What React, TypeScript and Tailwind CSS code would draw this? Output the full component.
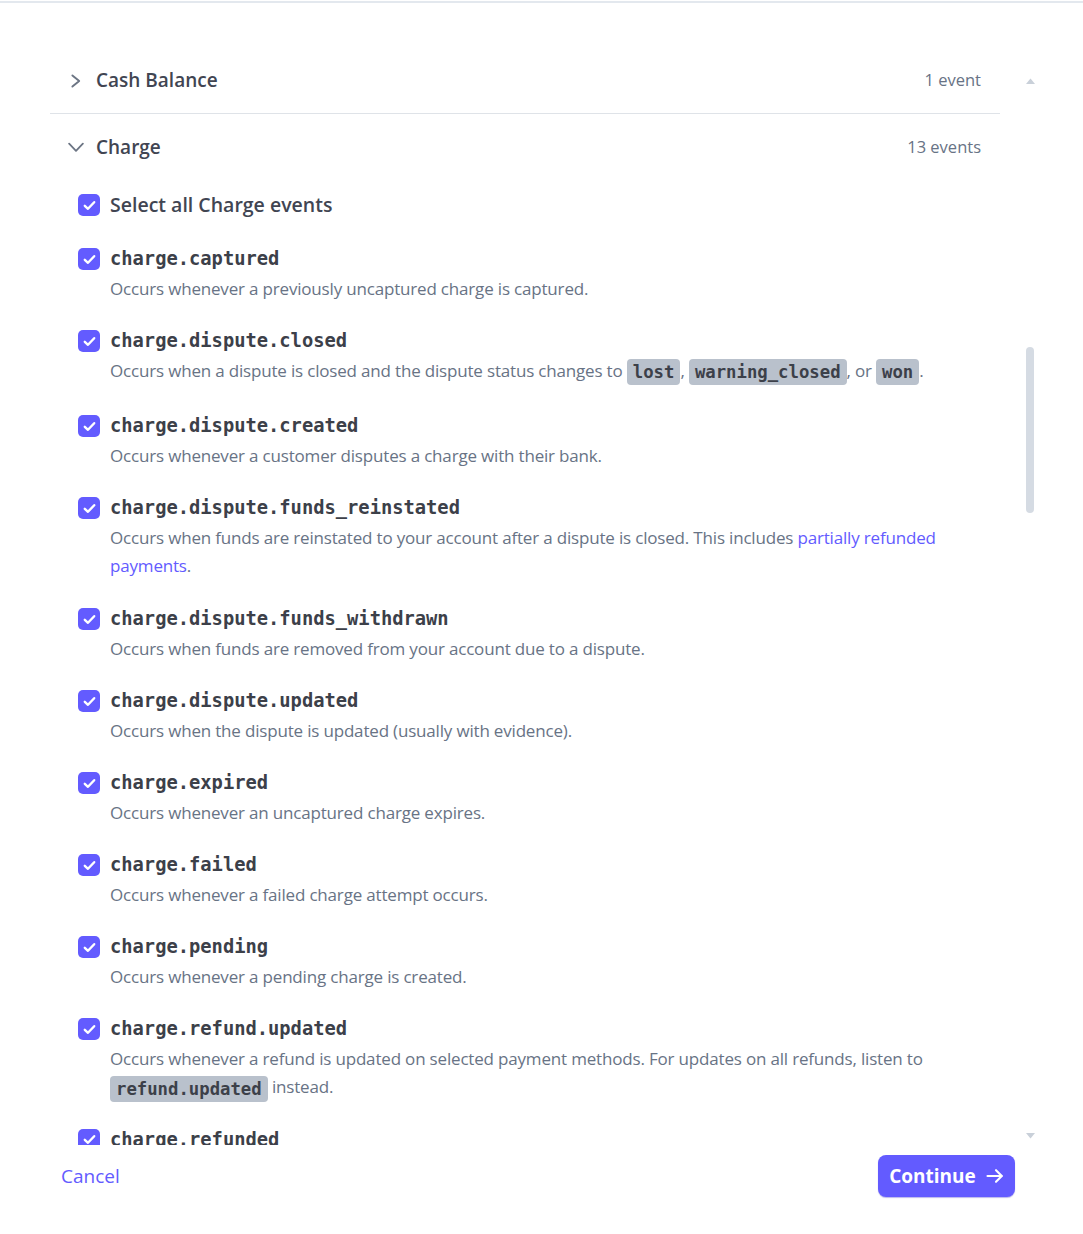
import React from "react";

type Part = string | { code: string } | { link: string };

interface EventItem {
    name: string;
    desc: Part[];
    extra?: string;
}

const chargeEvents: EventItem[] = [
    { name: "charge.captured", desc: ["Occurs whenever a previously uncaptured charge is captured."] },
    {
        name: "charge.dispute.closed",
        desc: [
            "Occurs when a dispute is closed and the dispute status changes to ",
            { code: "lost" },
            ", ",
            { code: "warning_closed" },
            ", or ",
            { code: "won" },
            ".",
        ],
        extra: "pb-[3px]",
    },
    { name: "charge.dispute.created", desc: ["Occurs whenever a customer disputes a charge with their bank."] },
    {
        name: "charge.dispute.funds_reinstated",
        desc: [
            "Occurs when funds are reinstated to your account after a dispute is closed. This includes ",
            { link: "partially refunded payments" },
            ".",
        ],
        extra: "pb-[1px]",
    },
    { name: "charge.dispute.funds_withdrawn", desc: ["Occurs when funds are removed from your account due to a dispute."] },
    { name: "charge.dispute.updated", desc: ["Occurs when the dispute is updated (usually with evidence)."] },
    { name: "charge.expired", desc: ["Occurs whenever an uncaptured charge expires."] },
    { name: "charge.failed", desc: ["Occurs whenever a failed charge attempt occurs."] },
    { name: "charge.pending", desc: ["Occurs whenever a pending charge is created."] },
    {
        name: "charge.refund.updated",
        desc: [
            "Occurs whenever a refund is updated on selected payment methods. For updates on all refunds, listen to ",
            { code: "refund.updated" },
            " instead.",
        ],
    },
    { name: "charge.refunded", desc: ["Occurs whenever a charge is refunded, including partial refunds."] },
    { name: "charge.succeeded", desc: ["Occurs whenever a charge is successful."] },
    { name: "charge.updated", desc: ["Occurs whenever a charge description or metadata is updated."] },
];

const sans = "font-['Open_Sans',sans-serif]";
const mono = "font-['DejaVu_Sans_Mono',monospace]";

function Checkbox() {
    return (
        <span className="mt-[3px] flex h-[22px] w-[22px] shrink-0 items-center justify-center rounded-[5px] bg-[#635bff]">
            <svg width="13" height="11" viewBox="0 0 13 11">
                <path
                    d="M1.8 5.8 5 8.8 11.2 2.2"
                    fill="none"
                    stroke="white"
                    strokeWidth="2.4"
                    strokeLinecap="round"
                    strokeLinejoin="round"
                />
            </svg>
        </span>
    );
}

function Desc({ parts }: { parts: Part[] }) {
    return (
        <p className={`${sans} mt-[2px] text-[17px] leading-[28px] tracking-[-0.18px] text-[#687385]`}>
            {parts.map((p, i) => {
                if (typeof p === "string") return <React.Fragment key={i}>{p}</React.Fragment>;
                if ("code" in p)
                    return (
                        <code
                            key={i}
                            className={`${mono} inline-block h-[26px] rounded-[4px] bg-[#b9c1cc] px-[6px] align-middle text-[17.3px] font-bold leading-[26px] tracking-normal text-[#3c4049]`}
                        >
                            {p.code}
                        </code>
                    );
                return (
                    <a key={i} className="font-medium text-[#635bff]">
                        {p.link}
                    </a>
                );
            })}
        </p>
    );
}

function GroupHeader({ title, count, open }: { title: string; count: string; open: boolean }) {
    return (
        <div className={`flex h-[66px] items-center pl-[18px] pr-[19px] ${open ? "" : "border-b border-[#dfe3e8]"}`}>
            <span className="flex w-[16px] justify-center">
                {open ? (
                    <svg width="17" height="11" viewBox="0 0 17 11">
                        <path d="M1.2 1.4 8.5 9 15.8 1.4" fill="none" stroke="#6c7584" strokeWidth="1.9" strokeLinecap="round" strokeLinejoin="round" />
                    </svg>
                ) : (
                    <svg width="12" height="14" viewBox="0 0 12 14">
                        <path d="M2.4 1.4 9.2 7 2.4 12.6" fill="none" stroke="#6c7584" strokeWidth="1.9" strokeLinecap="round" strokeLinejoin="round" />
                    </svg>
                )}
            </span>
            <span className={`${sans} ml-[12px] text-[19px] font-semibold text-[#414552]`}>{title}</span>
            <span className={`${sans} ml-auto text-[16.5px] text-[#687385]`}>{count}</span>
        </div>
    );
}

export default function App() {
    return (
        <div className="min-h-screen bg-white">
            <div className="mt-[1px] h-[2px] bg-[#e3e8ee]" />

            <div className="flex pl-[50px] pt-[45px]">
                <div className="h-[1097px] w-[950px] overflow-hidden">
                    <GroupHeader title="Cash Balance" count="1 event" open={false} />
                    <GroupHeader title="Charge" count="13 events" open />

                    <div className="mt-[11px] flex flex-col gap-[24px] pl-[28px] pr-[19px]">
                        <label className="mb-[2px] flex gap-[10px]">
                            <Checkbox />
                            <span className={`${sans} text-[19.5px] font-semibold leading-[28px] text-[#414552]`}>
                                Select all Charge events
                            </span>
                        </label>

                        {chargeEvents.map((ev) => (
                            <label key={ev.name} className={`flex gap-[10px] ${ev.extra ?? ""}`}>
                                <Checkbox />
                                <div className="min-w-0 flex-1">
                                    <div className={`${mono} text-[18.75px] font-bold leading-[28px] text-[#3c4049]`}>{ev.name}</div>
                                    <Desc parts={ev.desc} />
                                </div>
                            </label>
                        ))}
                    </div>
                </div>

                {/* scrollbar */}
                <div className="ml-[22px] flex h-[1097px] w-[16px] flex-col items-center pt-[30px]">
                    <svg width="9" height="6" viewBox="0 0 9 6">
                        <path d="M0 6 4.5 0.5 9 6Z" fill="#c9d0d9" />
                    </svg>
                    <div className="mt-[263px] h-[166px] w-[8px] rounded-full bg-[#d5dbe3]" />
                    <svg className="mt-[620px]" width="9" height="6" viewBox="0 0 9 6">
                        <path d="M0 0 4.5 5.5 9 0Z" fill="#c9d0d9" />
                    </svg>
                </div>
            </div>

            <div className="flex items-center justify-between pl-[61px] pr-[68px] pt-[10px]">
                <button className={`${sans} text-[19px] text-[#635bff]`}>Cancel</button>
                <button
                    className={`${sans} flex h-[42px] w-[137px] items-center justify-center gap-[10px] rounded-[8px] bg-[#635bff] text-[19px] font-bold text-white shadow-[0_1px_1px_rgba(60,50,200,0.35)]`}
                >
                    Continue
                    <svg width="18" height="16" viewBox="0 0 18 16">
                        <path d="M1.5 8h14.5M10 2.2 15.8 8 10 13.8" fill="none" stroke="white" strokeWidth="2.1" strokeLinecap="round" strokeLinejoin="round" />
                    </svg>
                </button>
            </div>
        </div>
    );
}
